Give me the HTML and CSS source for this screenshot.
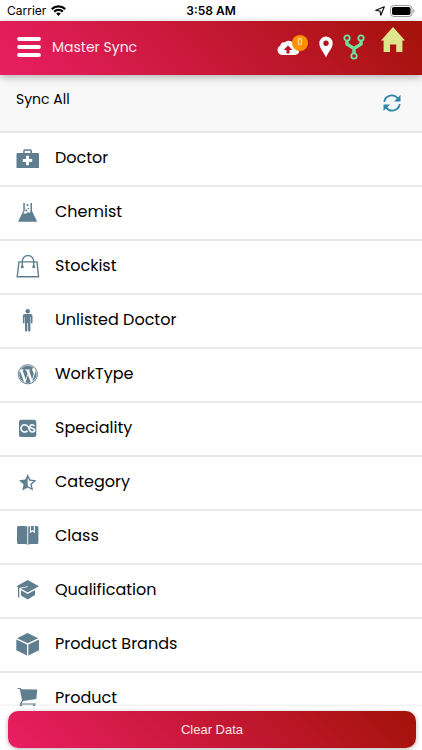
FILE: index.html
```html
<!DOCTYPE html>
<html lang="en">
<head>
<meta charset="utf-8">
<meta name="viewport" content="width=device-width, initial-scale=1">
<title>Master Sync</title>
<link rel="stylesheet" href="styles.css">
</head>
<body>
<div class="app">
  <div class="status">
    <div class="status-side">
      <span>Carrier</span>
      <svg width="15" height="11" viewBox="0 0 15 11" fill="none" stroke="#000" stroke-width="2.2"><path d="M.8 4.1a9.6 9.6 0 0 1 13.4 0M3.2 6.600a6.100 6.100 0 0 1 8.600 0"/><path d="M7.500 11 5.200 8.500a3.300 3.300 0 0 1 4.600 0z" fill="#000" stroke="none"/></svg>
    </div>
    <span class="clock">3:58 AM</span>
    <div class="status-side status-end">
      <svg width="10" height="10" viewBox="0 0 10 10" fill="none" stroke="#111" stroke-width="1.2" stroke-linejoin="round"><path d="M9.300.8 5.800 9.200 5 5 .8 4.300z"/></svg>
      <svg width="25" height="12" viewBox="0 0 25 12"><rect x=".5" y=".5" width="21.500" height="11" rx="3.200" fill="none" stroke="#999"/><rect x="2" y="2" width="18.500" height="8" rx="1.800"/><path d="M23.300 4v4q1.300-.6 1.300-2t-1.300-2" fill="#999"/></svg>
    </div>
  </div>

  <header class="header">
    <button class="icon-button" type="button" aria-label="Menu">
      <svg width="24" height="20" viewBox="0 0 24 20" stroke="#fff" stroke-width="3.800" stroke-linecap="round"><path d="M2 2h20M2 10h20M2 18h20"/></svg>
    </button>
    <h1 class="title">Master Sync</h1>
    <nav class="actions">
      <button class="icon-button upload" type="button" aria-label="Pending uploads">
        <svg width="22" height="15" viewBox="0 0 22 15"><path fill="#fff" fill-rule="evenodd" d="M5 15a5 5 0 0 1-1.600-9.500A4 4 0 0 1 8 2.300 6 6 0 0 1 17.800 6 4.500 4.500 0 0 1 18 15zM11 5.500 6.600 10h2.900v3.500h3V10h2.900z"/></svg>
        <span class="badge">0</span>
      </button>
      <button class="icon-button" type="button" aria-label="Location">
        <svg width="14" height="22" viewBox="0 0 14 22"><path fill="#fff" fill-rule="evenodd" d="M7 .5a6.700 6.700 0 0 1 6.700 6.700C13.700 12 9.200 16 7 21.500 4.800 16 .3 12 .3 7.200A6.700 6.700 0 0 1 7 .5m0 4a2.700 2.700 0 1 0 0 5.400 2.700 2.700 0 0 0 0-5.400"/></svg>
      </button>
      <button class="icon-button" type="button" aria-label="Hierarchy">
        <svg width="22" height="26" viewBox="0 0 22 26" fill="none" stroke="#72df9b"><path stroke-width="3.400" d="M4 6.500v3.600l7 4.400 7-4.400V6.500M11 14v5"/><g stroke-width="1.800" fill="#ad1420"><circle cx="4" cy="4" r="2.700"/><circle cx="18" cy="4" r="2.700"/><circle cx="11" cy="22" r="2.700"/></g></svg>
      </button>
      <button class="icon-button home" type="button" aria-label="Home">
        <svg width="24" height="25" viewBox="0 0 24 25"><path fill="#dfe58d" d="M12 0 24 13.500h-2.600V25h-6.200v-7.500H9V25H2.600V13.500H0z"/></svg>
      </button>
    </nav>
  </header>

  <main class="content">
    <section class="sync-all">
      <span>Sync All</span>
      <button class="icon-button" type="button" aria-label="Sync all">
        <svg width="18" height="18" viewBox="0 0 18 18" fill="none" stroke="#2b87ab" stroke-width="1.800"><path d="M1.300 7.800A7.500 7.500 0 0 1 15 4.800M16.700 10.200A7.500 7.500 0 0 1 3 13.200"/><path fill="#2b87ab" stroke="none" d="M17.500 1v6.600H11zM.5 17v-6.600H7z"/></svg>
      </button>
    </section>
    <ul class="list">
      <li class="row"><svg class="icon" viewBox="0 0 24 24"><path fill-rule="evenodd" d="M7.200 6V3.900Q7.200 2.200 9 2.200h5.200q1.800 0 1.800 1.700V6h6q1 0 1 1v14H.5V7q0-1 1-1zM8.700 6h5.800V4.500q0-.8-.8-.8H9.500q-.8 0-.8.8zM10 8.800v3.200H6.800v3H10v3.200h3V15h3.200v-3H13V8.800z"/></svg><span>Doctor</span></li>
      <li class="row"><svg class="icon" viewBox="0 0 24 24"><path fill-rule="evenodd" d="M7.300 2h1.500v7.500l-1.400 3h3.400l1-1.700 1.500 1.200 1.300-1.500-.6-1.500h.5V2H16v8l5.200 10.700H2L7.300 10z"/><circle cx="11.500" cy="4" r="1.100"/><circle cx="12.500" cy="7.500" r=".8"/><circle cx="10.300" cy="9.500" r="1.100"/></svg><span>Chemist</span></li>
      <li class="row"><svg class="icon line" viewBox="0 0 24 24"><path d="M3 6.900h18l1.600 14.800H1.200zM6.300 11.500V6a5.700 5.400 0 0 1 11.400 0v5.500"/><circle cx="6.300" cy="11.800" r=".8"/><circle cx="17.700" cy="11.800" r=".8"/></svg><span>Stockist</span></li>
      <li class="row"><svg class="icon" viewBox="0 0 24 24"><circle cx="11.700" cy="2.300" r="2.200"/><path d="M9 5h5.400q2.100 0 2.100 2v6.500q0 .9-.8.900t-.8-.9V8h-.5v13.600q0 1.100-1.100 1.100T12.100 21.600V14h-.8v7.600q0 1.100-1.100 1.100T9 21.600V8h-.5v5.500q0 .9-.8.900t-.8-.9V7q0-2 2.100-2"/></svg><span>Unlisted Doctor</span></li>
      <li class="row"><svg class="icon" viewBox="-36 -22 592 592"><path d="M61.700 169.400l101.500 278C92.200 413 43.300 340.200 43.300 256c0-30.900 6.600-60.100 18.400-86.600zm337.900 75.900c0-26.300-9.400-44.500-17.500-58.700-10.800-17.500-20.900-32.400-20.900-49.900 0-19.600 14.800-37.800 35.700-37.800.9 0 1.800.1 2.800.2-37.900-34.700-88.300-55.900-143.700-55.900-74.300 0-139.700 38.100-177.800 95.900 5 .2 9.700.3 13.700.3 22.200 0 56.700-2.700 56.700-2.700 11.500-.7 12.800 16.200 1.400 17.500 0 0-11.500 1.300-24.300 2l77.500 230.400L249.800 247l-33.100-90.800c-11.500-.7-22.300-2-22.300-2-11.500-.7-10.100-18.200 1.300-17.500 0 0 35.100 2.700 56 2.700 22.200 0 56.700-2.700 56.700-2.700 11.500-.7 12.800 16.200 1.400 17.500 0 0-11.500 1.300-24.300 2l76.900 228.700 21.200-70.900c9-29.400 16-50.500 16-68.700zm-139.900 29.300l-63.800 185.500c19.100 5.600 39.200 8.700 60.100 8.700 24.800 0 48.500-4.300 70.600-12.100-.6-.9-1.100-1.900-1.500-2.900l-65.400-179.200zm183-120.700c.9 6.800 1.400 14 1.400 21.900 0 21.600-4 45.800-16.200 76.200l-65 187.900C426.200 403 468.700 334.500 468.700 256c0-37-9.400-71.800-26-102.100z"/><circle cx="256" cy="256" r="236" fill="none" stroke="#5f7f90" stroke-width="24"/></svg><span>WorkType</span></li>
      <li class="row"><svg class="icon" viewBox="0 0 24 24"><rect x="3" y="2.700" width="17.300" height="17.300" rx="2.600"/><path fill="none" stroke="#fff" stroke-width="1.600" d="M18.300 9Q17.500 7.800 16 7.800q-2 0-2 1.700 0 1.300 2 1.700 2.600.5 2.600 2.100t-2.300 1.700q-1.900 0-2.800-2.100L12.400 10Q11.400 7.800 8.600 7.800a3.600 3.600 0 0 0 0 7.200q1.900 0 2.900-1.300"/></svg><span>Speciality</span></li>
      <li class="row"><svg class="icon" viewBox="0 0 24 24"><path fill-rule="evenodd" d="m11.700 3 2.500 5.600 6.200.7-4.600 4.100 1.300 6.100-5.400-3.100-5.400 3.100 1.300-6.100L3 9.300l6.200-.7zm0 3.400v8.500l3.500 2-.9-4 3-2.700-4-.4z"/></svg><span>Category</span></li>
      <li class="row"><svg class="icon" viewBox="0 0 24 24"><path d="M2.500 1H9q1.800 0 2.300.8V20q-.6-.9-2.300-.9H2.500Q1 19 1 17.500v-15Q1 1 2.500 1M12.200 20V1.800q.6-.8 1.700-.8v7.200l2.500-1.800 2.500 1.800V1h2q1.500 0 1.500 1.500v15q0 1.500-1.500 1.500h-6.300q-1.800 0-2.400 1M15 1h2.800v5l-1.400-1L15 6z"/></svg><span>Class</span></li>
      <li class="row"><svg class="icon" viewBox="0 0 24 24"><path d="M11.700 1 22.900 7.300 11.700 13.500 4.800 9.600 11.700 8v-.8L3.300 9v9.700L2 18V8L.5 7.300zM5 11.300l6.700 3.800 7.300-4v5l-7.300 4.300L5 16.500z"/></svg><span>Qualification</span></li>
      <li class="row"><svg class="icon" viewBox="0 0 24 24"><path d="M11.600.1 22.200 5.200 11.600 10.300 1 5.200zM.3 6.500 11 11.600v11L.3 17.200zM23 6.500l-10.700 5.100v11L23 17.200z"/></svg><span>Product Brands</span></li>
      <li class="row"><svg class="icon" viewBox="0 0 24 24"><path d="M1.700 1h2.800l.9 1.200 15.900.2-1 9.600L7.200 14l-1.800 2.400H20v1.200H3.200l2.900-4L3.800 2H1.700z"/><circle cx="5" cy="18.800" r="1.200"/><circle cx="18" cy="18.800" r="1.200"/></svg><span>Product</span></li>
    </ul>
  </main>

  <footer class="footer">
    <button class="clear" type="button">Clear Data</button>
  </footer>
</div>
</body>
</html>
```
FILE: styles.css
```css
* {
  box-sizing: border-box;
}

body {
  margin: 0;
  background: #fff;
  color: #111;
  font-family: Poppins, Inter, sans-serif;
}

.app {
  display: flex;
  flex-direction: column;
  height: 100vh;
}

.status {
  display: flex;
  align-items: center;
  padding: 0 7px;
  font: 12px/21px Inter, sans-serif;
  color: #000;
}

.status-side {
  display: flex;
  flex: 1;
  align-items: center;
  gap: 5px;
}

.status-end {
  justify-content: flex-end;
}

.clock {
  font-weight: 600;
}

.header {
  position: relative;
  display: flex;
  flex: none;
  align-items: center;
  height: 54px;
  padding: 0 17px 2px;
  background: linear-gradient(45deg, #e91e63, #a31208);
  box-shadow: 0 2px 8px rgba(0, 0, 0, 0.3);
  color: #fff;
}

.icon-button {
  display: block;
  padding: 0;
  border: 0;
  background: none;
  font: inherit;
  color: inherit;
}

.icon-button svg {
  display: block;
}

.title {
  margin: 0 0 0 11px;
  font-size: 14px;
  font-weight: 400;
  opacity: 0.9;
}

.actions {
  display: flex;
  align-items: center;
  align-self: stretch;
  gap: 10px;
  margin-left: auto;
}

.upload {
  position: relative;
  margin-right: 10px;
}

.badge {
  position: absolute;
  top: -5px;
  left: 15px;
  width: 16px;
  border-radius: 8px;
  background: #ff9100;
  font-size: 8px;
  line-height: 16px;
  text-align: center;
}

.home {
  align-self: flex-start;
  margin: 6px 0 0 6px;
}

.content {
  flex: 1;
  min-height: 0;
  overflow: hidden;
}

.sync-all {
  display: flex;
  align-items: center;
  justify-content: space-between;
  height: 58px;
  padding: 0 21px 0 16px;
  border-bottom: 2px solid #e8e8e8;
  background: #f8f8f8;
  color: #000;
  font-size: 14px;
}

.sync-all span {
  padding-bottom: 8px;
}

.list {
  margin: 0;
  padding: 0;
  list-style: none;
}

.row {
  display: flex;
  align-items: center;
  gap: 15px;
  height: 54px;
  padding: 0 16px;
  border-bottom: 2px solid #e8e8e8;
  color: #000;
  font-size: 16px;
  line-height: 16px;
}

.row span {
  padding-bottom: 2px;
}

.icon {
  flex: none;
  width: 24px;
  height: 24px;
  fill: #5f7f90;
}

.line {
  fill: none;
  stroke: #5f7f90;
  stroke-width: 1.4;
}

.footer {
  position: relative;
  padding: 5px 6px 2px 8px;
  background: #fff;
  box-shadow: 0 -1px 2px rgba(0, 0, 0, 0.08);
}

.clear {
  display: block;
  width: 100%;
  height: 37px;
  border: 0;
  border-radius: 10px;
  background: linear-gradient(45deg, #e91e63, #a31208);
  box-shadow: 0 1px 4px rgba(0, 0, 0, 0.3);
  color: #fbe3e8;
  font: 13px "Liberation Sans", Arial, sans-serif;
}
```
